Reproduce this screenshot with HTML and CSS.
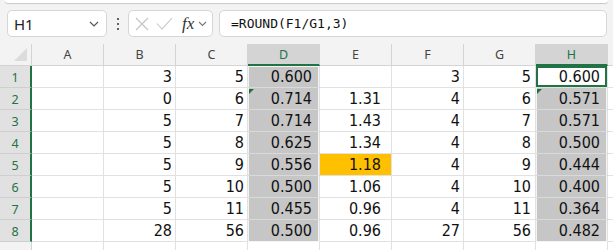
FILE: index.html
```html
<!DOCTYPE html>
<html lang="en">

<head>
    <meta charset="UTF-8">
    <meta name="viewport" content="width=device-width, initial-scale=1.0">
    <title>Sheet1</title>
    <link rel="stylesheet" href="styles.css">
</head>

<body>
    <div class="ribbon-edge"></div>

    <div class="toolbar">
        <div class="name-box">
            <span>H1</span>
            <svg class="chevron" width="10" height="6" viewBox="0 0 10 6"><path d="M1 1l4 4 4-4" fill="none" stroke="#555" stroke-width="1.2"/></svg>
        </div>
        <div class="kebab"><i></i><i></i><i></i></div>
        <div class="fx-box">
            <svg width="14" height="14" viewBox="0 0 14 14"><path d="M1 1l12 12M13 1L1 13" stroke="#c4c4c4" stroke-width="1.1"/></svg>
            <svg width="17" height="13" viewBox="0 0 17 13"><path d="M1 6.5l5 5.5L16 1" fill="none" stroke="#c4c4c4" stroke-width="1.1"/></svg>
            <span class="fx">fx</span>
            <svg class="chevron" width="9" height="6" viewBox="0 0 9 6"><path d="M1 1l3.5 3.5L8 1" fill="none" stroke="#777" stroke-width="1.1"/></svg>
        </div>
        <div class="formula-input">=ROUND(F1/G1,3)</div>
    </div>

    <div class="sheet" id="sheet"></div>

    <script>
        const cols = ['A', 'B', 'C', 'D', 'E', 'F', 'G', 'H', 'I'];
        const data = [
            ['', '3', '5', '0.600', '', '3', '5', '0.600'],
            ['', '0', '6', '0.714', '1.31', '4', '6', '0.571'],
            ['', '5', '7', '0.714', '1.43', '4', '7', '0.571'],
            ['', '5', '8', '0.625', '1.34', '4', '8', '0.500'],
            ['', '5', '9', '0.556', '1.18', '4', '9', '0.444'],
            ['', '5', '10', '0.500', '1.06', '4', '10', '0.400'],
            ['', '5', '11', '0.455', '0.96', '4', '11', '0.364'],
            ['', '28', '56', '0.500', '0.96', '27', '56', '0.482'],
            ['', '', '', '', '', '', '', '']
        ];

        const sheet = document.getElementById('sheet');

        function add(cls, text) {
            const el = document.createElement('div');
            el.className = cls;
            el.textContent = text || '';
            sheet.appendChild(el);
            return el;
        }

        add('corner');
        // column I and row 9 only peek in at the edges, their labels sit off screen
        cols.forEach(c => {
            add('col-head' + (c === 'D' || c === 'H' ? ' picked' : ''), c === 'I' ? '' : c);
        });

        data.forEach((row, r) => {
            const inSel = r < 8;
            add('row-head' + (inSel ? ' picked' : ''), inSel ? r + 1 : '');
            cols.forEach((c, i) => {
                let cls = 'cell col-' + c.toLowerCase();
                if (inSel && c === 'D') cls += ' sel';
                if (inSel && c === 'H') cls += r === 0 ? ' active' : ' sel';
                if (r === 0 && inSel && (c === 'D' || c === 'H')) cls += ' sel-top';
                if (r === 7 && (c === 'D' || c === 'H')) cls += ' sel-bottom';
                if (r === 1 && (c === 'D' || c === 'H')) cls += ' flag';
                if (r === 4 && c === 'E') cls += ' warn';
                add(cls, row[i]);
            });
        });
    </script>
</body>

</html>
```

FILE: styles.css
```css
body {
    margin: 0;
    background-color: #f3f3f3;
    font-family: 'Noto Sans', sans-serif;
    overflow: hidden;
    height: 250px;
}

.ribbon-edge {
    height: 3px;
    margin: 0 5px;
    background-color: #fff;
    border-radius: 0 0 6px 6px;
    box-shadow: 0 1px 1px rgba(0, 0, 0, 0.18);
}

/* formula bar */
.toolbar {
    display: flex;
    align-items: center;
    height: 27px;
    margin: 7px 6px 0 7px;
}

.name-box,
.fx-box,
.formula-input {
    box-sizing: border-box;
    height: 27px;
    background-color: #fff;
    border: 1px solid #d6d6d6;
    border-radius: 5px;
    display: flex;
    align-items: center;
}

.name-box {
    width: 100px;
    padding: 0 7px 0 6px;
    justify-content: space-between;
    font-size: 15px;
    color: #222;
}

.kebab {
    width: 21px;
    display: flex;
    flex-direction: column;
    align-items: center;
    gap: 3px;
}

.kebab i {
    width: 2px;
    height: 2px;
    background-color: #333;
    border-radius: 1px;
}

.fx-box {
    width: 85px;
    padding: 0 4px 0 6px;
    gap: 7px;
}

.fx {
    font-family: 'Liberation Serif', serif;
    font-style: italic;
    font-size: 17px;
    color: #333;
    margin-left: 2px;
    margin-right: -3px;
}

.formula-input {
    flex: 1;
    margin-left: 6px;
    padding-left: 11px;
    font-family: 'DejaVu Sans Mono', monospace;
    font-size: 13px;
    color: #111;
}

/* grid */
.sheet {
    margin-top: 7px;
    height: 206px;
    overflow: hidden;
    display: grid;
    grid-template-columns: 32px repeat(9, 72px);
    grid-auto-rows: 22px;
}

.corner {
    position: relative;
    border-right: 1px solid #d4d4d4;
    border-bottom: 1px solid #d4d4d4;
}

.corner::after {
    content: "";
    position: absolute;
    right: 4px;
    bottom: 4px;
    border-left: 13px solid transparent;
    border-bottom: 13px solid #dcdcdc;
}

.col-head {
    box-sizing: border-box;
    border-right: 1px solid #d4d4d4;
    border-bottom: 1px solid #d4d4d4;
    display: flex;
    align-items: center;
    justify-content: center;
    font-size: 12.5px;
    color: #444;
}

.col-head.picked {
    background-color: #d4d4d4;
    border-bottom: 2px solid #217346;
    color: #217346;
}

.row-head {
    box-sizing: border-box;
    border-right: 1px solid #d4d4d4;
    border-bottom: 1px solid #d4d4d4;
    display: flex;
    align-items: center;
    justify-content: center;
    font-size: 12.5px;
    color: #444;
    padding-top: 2px;
}

.row-head.picked {
    background-color: #e1e1e1;
    border-right: 2px solid #217346;
    border-bottom-color: #cfcfcf;
    color: #217346;
}

.cell {
    box-sizing: border-box;
    position: relative;
    background-color: #fff;
    border-right: 1px solid #e1e1e1;
    border-bottom: 1px solid #e1e1e1;
    display: flex;
    align-items: flex-end;
    justify-content: flex-end;
    padding: 0 3px 0 0;
    font-family: 'Liberation Sans Narrow', 'DejaVu Sans Condensed', sans-serif;
    font-size: 16px;
    line-height: 20px;
    color: #111;
}

.col-d,
.col-h {
    padding-right: 7px;
}

.col-e {
    padding-right: 10px;
}

.col-g {
    padding-right: 4px;
}

.cell.sel {
    background-color: #c6c6c6;
    border-bottom-color: #dadada;
    box-shadow: inset 1px 0 #f4f4f4, inset -1px 0 #f4f4f4;
}

.cell.sel-top {
    box-shadow: inset 1px 1px #f4f4f4, inset -1px 0 #f4f4f4;
}

.cell.sel-bottom {
    border-bottom-color: #f4f4f4;
}

.cell.active {
    box-shadow: inset 0 0 0 2px #217346;
}

.cell.warn {
    background-color: #ffc000;
}

.cell.flag::before {
    content: "";
    position: absolute;
    left: 1px;
    top: 1px;
    border-top: 5px solid #1e7145;
    border-right: 5px solid transparent;
}
```
